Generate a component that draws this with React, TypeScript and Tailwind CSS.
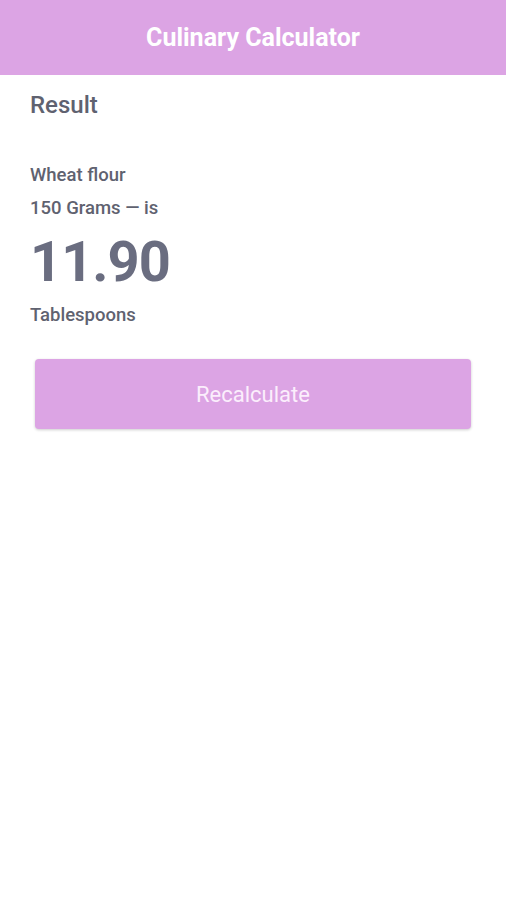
import React from 'react';

export default function App() {
  return (
    <div className="min-h-[900px] w-full bg-white" style={{ fontFamily: 'Roboto, "Liberation Sans", sans-serif' }}>
      {/* Header */}
      <header className="flex h-[75px] items-center justify-center bg-[#dca4e4]">
        <h1 className="text-[25px] font-bold text-white">Culinary Calculator</h1>
      </header>

      {/* Result */}
      <main className="px-[30px] pt-[16px]">
        <h2 className="text-[24px] font-medium leading-[28px] text-[#5f6270]">Result</h2>

        <div className="mt-[45px] text-[18.5px] font-medium leading-[22px] text-[#5f6270]">Wheat flour</div>
        <div className="mt-[11px] text-[18.5px] font-medium leading-[22px] text-[#5f6270]">150 Grams — is</div>
        <div className="mt-[13px] text-[56px] font-bold leading-[60px] tracking-[-1px] text-[#6a6d80]">11.90</div>
        <div className="mt-[12px] text-[18.5px] font-medium leading-[22px] text-[#5f6270]">Tablespoons</div>
      </main>

      <div className="px-[35px] pt-[33px]">
        <button className="flex h-[70px] w-full items-center justify-center rounded-[4px] bg-[#dca4e4] text-[22px] text-[#fbeefc] shadow-[0_1px_3px_rgba(0,0,0,0.2)]">
          Recalculate
        </button>
      </div>
    </div>
  );
}
